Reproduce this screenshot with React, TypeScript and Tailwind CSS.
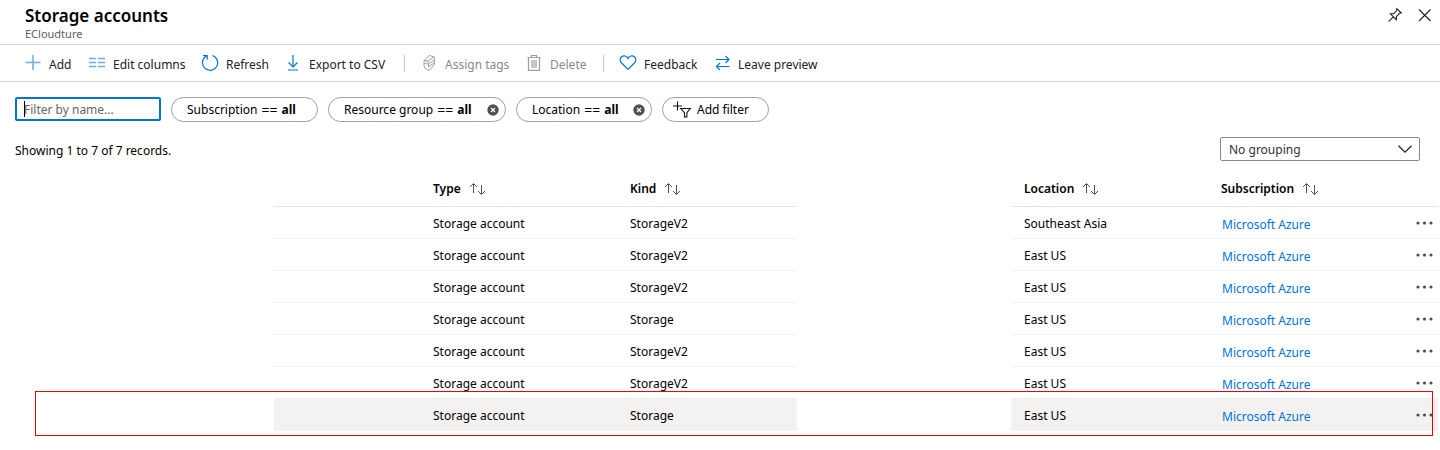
import type { ReactNode } from 'react';

type IconProps = { children: ReactNode; className?: string };

function Icon({ children, className = '' }: IconProps) {
  return (
    <svg
      viewBox="0 0 18 18"
      aria-hidden="true"
      fill="none"
      stroke="currentColor"
      className={`h-[18px] w-[18px] shrink-0 ${className}`}
    >
      {children}
    </svg>
  );
}

const icons = {
  add: (
    <Icon className="text-[#69afe5]">
      <path d="M9 1v15M1.500 8.500h15" strokeWidth="1.500" />
    </Icon>
  ),
  columns: (
    <Icon className="text-[#69afe5]">
      <path d="M1 4.500h7M10 4.500h7M1 8.500h7M10 8.500h7M1 12.500h7M10 12.500h7" strokeWidth="1.500" />
    </Icon>
  ),
  refresh: (
    <Icon className="text-[#0074dc]">
      <path d="M11.500 1.500a7.600 7.600 0 1 1-5.600.3M2 1.500h4.200v4.200" strokeWidth="1.200" />
    </Icon>
  ),
  download: (
    <Icon className="text-[#0074dc]">
      <path d="M9 1v12M4.500 8.500L9 13l4.500-4.500M4 16h10" strokeWidth="1.200" />
    </Icon>
  ),
  tags: (
    <Icon className="text-[#a19f9d]">
      <path d="M4 6.500l5.500-5 4.500 1.200.7 7.300-5.500 6.500L5.500 15 4 11.500zM4 6.500l4 .5 6-4.300M4.200 9.500l4.300.5 5.900-4M8.500 10v3l6-4.500M8 7v2" strokeWidth="1" />
    </Icon>
  ),
  trash: (
    <Icon className="text-[#a19f9d]">
      <path d="M2.500 3.500h13M6.500 3.500v-2h5v2M3.500 3.500v12.900h11V3.500" strokeWidth="1.200" />
      <path d="M6 6h6v8H6z" fill="#c8c6c4" stroke="none" />
    </Icon>
  ),
  heart: (
    <Icon className="text-[#0074dc]">
      <path d="M9 15.300L2.200 8.500C.5 6.500.9 3.800 2.800 2.500 5 1.100 7.700 2 9 4.400 10.300 2 13 1.100 15.200 2.500c1.900 1.300 2.300 4 .6 6z" strokeWidth="1.200" />
    </Icon>
  ),
  swap: (
    <Icon className="text-[#0074dc]">
      <path d="M3 5.500h13M12.500 2L16 5.500 12.500 9M16.500 12.500h-13M7 9l-3.500 3.500L7 16" strokeWidth="1.200" />
    </Icon>
  ),
};

type Command = { label: string; icon: ReactNode; width: string; disabled?: boolean };

const commandGroups: Command[][] = [
  [
    { label: 'Add', icon: icons.add, width: 'w-16' },
    { label: 'Edit columns', icon: icons.columns, width: 'w-[113px]' },
    { label: 'Refresh', icon: icons.refresh, width: 'w-[83px]' },
    { label: 'Export to CSV', icon: icons.download, width: 'w-[120px]' },
  ],
  [
    { label: 'Assign tags', icon: icons.tags, width: 'w-[105px]', disabled: true },
    { label: 'Delete', icon: icons.trash, width: 'w-[78px]', disabled: true },
  ],
  [
    { label: 'Feedback', icon: icons.heart, width: 'w-[94px]' },
    { label: 'Leave preview', icon: icons.swap, width: 'w-[120px]' },
  ],
];

function SortIcon() {
  return (
    <svg viewBox="0 0 18 14" aria-hidden="true" fill="none" stroke="#505050" className="h-3.5 w-[18px]">
      <path d="M4.500 11V2M1 5l3.500-3.500L8 5M12.500 3v9M9 9l3.500 3.500L16 9" />
    </svg>
  );
}

function ColumnTitle({ label }: { label: string }) {
  return (
    <th scope="col" className="pt-0.5 pl-[13px] text-left font-semibold">
      <button type="button" className="flex items-center gap-2">
        {label}
        <SortIcon />
      </button>
    </th>
  );
}

type FilterPillProps = { name: string; width: string; removable?: boolean };

function FilterPill({ name, width, removable }: FilterPillProps) {
  return (
    <div className={`flex h-[25px] items-center justify-between rounded-full border border-[#a0a0a0] pl-[15px] pr-1.5 ${width}`}>
      <button type="button" className="flex items-center gap-1 whitespace-nowrap">
        <span>{name}</span>
        <span className="text-sm leading-4">==</span>
        <b className="font-bold">all</b>
      </button>
      {removable && (
        <button type="button" aria-label={`Remove ${name} filter`}>
          <svg viewBox="0 0 12 12" aria-hidden="true" className="h-3 w-3">
            <circle cx="6" cy="6" r="5.700" fill="#505050" />
            <path d="M4 4l4 4M8 4L4 8" stroke="#fff" strokeWidth="1.200" />
          </svg>
        </button>
      )}
    </div>
  );
}

const accounts = [
  { kind: 'StorageV2', location: 'Southeast Asia' },
  { kind: 'StorageV2', location: 'East US' },
  { kind: 'StorageV2', location: 'East US' },
  { kind: 'Storage', location: 'East US' },
  { kind: 'StorageV2', location: 'East US' },
  { kind: 'StorageV2', location: 'East US' },
  { kind: 'Storage', location: 'East US', selected: true },
];

export default function App() {
  return (
    <main className="bg-white font-['Noto_Sans','Open_Sans',sans-serif] text-xs text-black">
      <header className="flex h-[45px] items-start justify-between border-b border-[#d2d2d2] pl-[25px] pr-[7px]">
        <div className="pt-1.5">
          <h1 className="text-[17px] leading-5 font-semibold">Storage accounts</h1>
          <p className="text-[11px] leading-4 text-[#605e5c]">ECloudture</p>
        </div>
        <div className="flex gap-3.5 pt-[7px]">
          <button type="button" aria-label="Pin">
            <svg viewBox="0 0 16 16" aria-hidden="true" fill="none" stroke="#222" className="h-4 w-4">
              <path d="M1.500 14.700l4.800-4.800M9.800 1.700l4.500 4.300-1.800.3-3 3.100-.2 3.300-5.900-5.900 3.300-.2 3-3z" strokeWidth="1.100" />
            </svg>
          </button>
          <button type="button" aria-label="Close">
            <svg viewBox="0 0 16 16" aria-hidden="true" stroke="#222" className="h-4 w-4">
              <path d="M2 2.500l11.500 11.500M13.500 2.500L2 14" strokeWidth="1.100" />
            </svg>
          </button>
        </div>
      </header>

      <nav aria-label="Commands" className="flex h-[37px] items-center border-b border-[#d2d2d2] pl-6 text-[#222]">
        {commandGroups.map((group, index) => (
          <div key={group[0].label} className="flex items-center">
            {index > 0 && <span className="mr-[15px] h-[17px] w-px bg-[#c8c6c4]" />}
            {group.map((command) => (
              <button
                key={command.label}
                type="button"
                disabled={command.disabled}
                className={`flex items-center gap-[7px] whitespace-nowrap disabled:text-[#8a8886] ${command.width}`}
              >
                {command.icon}
                <span className="pt-[3px]">{command.label}</span>
              </button>
            ))}
          </div>
        ))}
      </nav>

      <div className="flex gap-2.5 pt-[15px] pl-[15px]">
        <div className="relative">
          <input
            type="text"
            aria-label="Filter by name"
            placeholder="Filter by name..."
            className="block h-6 w-[146px] rounded-xs border-2 border-[#0074dc] pl-[7px] outline-none placeholder:text-[#666]"
          />
          <span className="absolute top-1 left-[9px] h-4 w-px bg-black" />
        </div>
        <FilterPill name="Subscription" width="w-[147px]" />
        <FilterPill name="Resource group" width="w-[178px]" removable />
        <FilterPill name="Location" width="w-[136px]" removable />
        <button type="button" className="flex h-[25px] w-[107px] items-center gap-1 rounded-full border border-[#a0a0a0] pl-2.5 whitespace-nowrap">
          <svg viewBox="0 0 20 18" aria-hidden="true" fill="none" stroke="#111" className="h-[18px] w-5">
            <path d="M4.500 .5v9M0 5h9M7.700 7.500h9.600l-3.400 4.200v4.300h-2.400v-4.300z" strokeWidth="1.100" />
          </svg>
          Add filter
        </button>
      </div>

      <div className="flex items-center justify-between pt-[15px] pr-5 pl-[15px]">
        <p className="pt-1">Showing 1 to 7 of 7 records.</p>
        <div className="relative">
          <select
            aria-label="Grouping"
            className="block h-6 w-[200px] appearance-none rounded-xs border border-[#8a8886] bg-white pt-0.5 pl-2 text-[#323130]"
          >
            <option>No grouping</option>
          </select>
          <svg viewBox="0 0 14 8" aria-hidden="true" fill="none" stroke="#222" className="pointer-events-none absolute top-2 right-2 h-2 w-3.5">
            <path d="M.5 .8L7 7.200 13.500 .8" strokeWidth="1.200" />
          </svg>
        </div>
      </div>

      <div className="mr-0.5 pt-[9px] pb-5">
        <section className="relative">
          <table className="w-full table-fixed border-separate border-spacing-0">
            <colgroup>
              <col className="w-[274px]" />
              <col className="w-[146px]" />
              <col className="w-[197px]" />
              <col className="w-[180px]" />
              <col />
              <col className="w-[197px]" />
              <col className="w-[197px]" />
              <col className="w-[33px]" />
            </colgroup>
            <thead>
              <tr className="h-[37px] *:border-b *:border-[#e5e5e5] *:nth-[1]:border-0 *:nth-[5]:border-0">
                <td />
                <td />
                <ColumnTitle label="Type" />
                <ColumnTitle label="Kind" />
                <td />
                <ColumnTitle label="Location" />
                <ColumnTitle label="Subscription" />
                <td />
              </tr>
            </thead>
            <tbody>
              {accounts.map((account, index) => {
                const cell = account.selected
                  ? 'border-b border-[#f3f2f1] bg-[#f3f2f1]'
                  : 'border-b border-[#f0f0f0]';
                return (
                  <tr key={index} className="h-8">
                    <td />
                    <td className={cell} />
                    <td className={`pt-0.5 pl-[13px] ${cell}`}>Storage account</td>
                    <td className={`pt-0.5 pl-[13px] ${cell}`}>{account.kind}</td>
                    <td />
                    <td className={`pt-0.5 pl-[13px] ${cell}`}>{account.location}</td>
                    <td className={`pt-1 pl-3.5 ${cell}`}>
                      <a href="#azure" className="text-[#0074dc]">Microsoft Azure</a>
                    </td>
                    <td className={`pl-[11px] ${cell}`}>
                      <button type="button" aria-label="More actions" className="flex">
                        <svg viewBox="0 0 18 4" aria-hidden="true" fill="#505050" className="h-1 w-[18px]">
                          <circle cx="2" cy="2" r="1.600" />
                          <circle cx="8.500" cy="2" r="1.600" />
                          <circle cx="15" cy="2" r="1.600" />
                        </svg>
                      </button>
                    </td>
                  </tr>
                );
              })}
            </tbody>
          </table>
          <div className="pointer-events-none absolute right-[5px] -bottom-[5px] left-[35px] h-[45px] border border-[#f00000]" />
        </section>
      </div>
    </main>
  );
}
